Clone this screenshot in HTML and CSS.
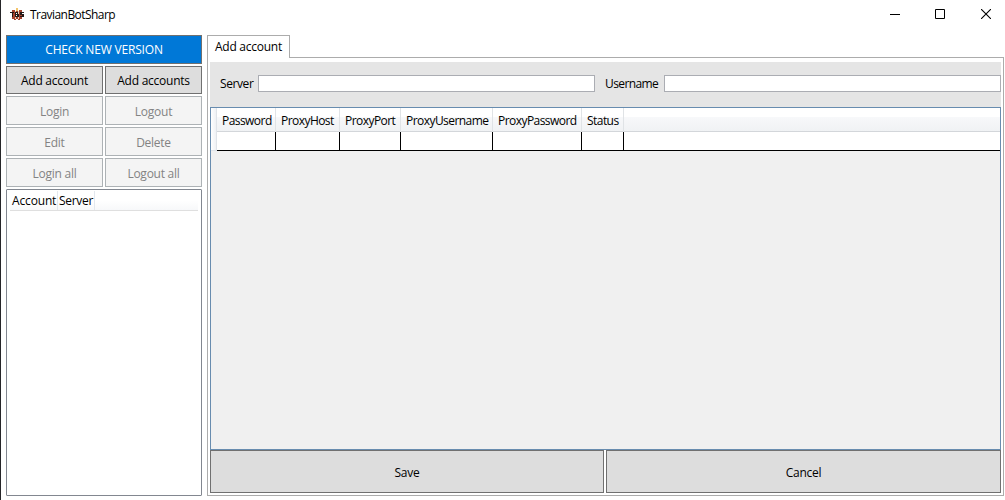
FILE: index.html
```html
<!DOCTYPE html>
<html lang="en">
<head>
  <meta charset="UTF-8">
  <title>TravianBotSharp</title>
  <link rel="stylesheet" href="styles.css">
</head>
<body>
  <div class="window">
    <header class="titlebar">
      <svg class="logo" width="14" height="14" viewBox="0 0 14 14">
        <path d="M6 0h2v3h-2z" fill="#f3c56b"/>
        <path d="M2 2h3v1h4v-1h3v9h-2v1h-2v-1h-2v1h-2v-1h-2z" fill="#a5402c"/>
        <path d="M5 3h1v8h-1zM8 3h1v8h-1z" fill="#ead0b8"/>
        <path d="M0 4h4v1h-1v4h-1v-4h-2zM5 4h3v2h1v3h-4zM10 4h4v1h-2v1h2v3h-4v-1h2v-1h-2z" fill="#241a18"/>
        <path d="M6 5h1v1h-1zM6 7h1v1h-1z" fill="#fff"/>
      </svg>
      <span class="title">TravianBotSharp</span>
      <div class="controls">
        <svg width="10" height="10" viewBox="0 0 10 10"><path d="M0 5.5h10" stroke="#000"/></svg>
        <svg width="10" height="10" viewBox="0 0 10 10"><path d="M.5 .5h9v9h-9z" fill="none" stroke="#000"/></svg>
        <svg width="10" height="10" viewBox="0 0 10 10"><path d="M0 0l10 10M10 0l-10 10" stroke="#000" stroke-width="1.1"/></svg>
      </div>
    </header>

    <div class="main">
      <aside class="sidebar">
        <button class="btn primary">CHECK NEW VERSION</button>
        <button class="btn">Add account</button>
        <button class="btn">Add accounts</button>
        <button class="btn" disabled>Login</button>
        <button class="btn" disabled>Logout</button>
        <button class="btn" disabled>Edit</button>
        <button class="btn" disabled>Delete</button>
        <button class="btn" disabled>Login all</button>
        <button class="btn" disabled>Logout all</button>
        <div class="accounts">
          <div class="accounts-head">
            <span class="col-account">Account</span>
            <span class="col-server">Server</span>
          </div>
        </div>
      </aside>

      <section class="tabs">
        <div class="tab">Add account</div>
        <div class="panel">
          <div class="form">
            <label class="lbl-server" for="server">Server</label>
            <input id="server" type="text">
            <label class="lbl-user" for="username">Username</label>
            <input id="username" type="text">
          </div>
          <div class="grid">
            <div class="row head">
              <span class="corner"></span>
              <span>Password</span>
              <span>ProxyHost</span>
              <span>ProxyPort</span>
              <span>ProxyUsername</span>
              <span>ProxyPassword</span>
              <span>Status</span>
              <span class="rest"></span>
            </div>
            <div class="row cells">
              <span class="corner"></span>
              <span></span>
              <span></span>
              <span></span>
              <span></span>
              <span></span>
              <span></span>
              <span class="rest"></span>
            </div>
          </div>
          <div class="actions">
            <button class="btn">Save</button>
            <button class="btn">Cancel</button>
          </div>
        </div>
      </section>
    </div>
  </div>
</body>
</html>
```
FILE: styles.css
```css
*{
  box-sizing: border-box;
}

body{
  margin: 0;
  background-color: #fff;
  color: #000;
  font-family: "Segoe UI", "Open Sans", sans-serif;
  font-size: 12px;
  letter-spacing: -0.25px;
  line-height: 16px;
}

.window{
  display: flex;
  flex-direction: column;
  height: 500px;
  border-left: 1px solid #252528;
  overflow: hidden;
}

.titlebar{
  display: flex;
  align-items: center;
  height: 29px;
  padding: 0 14px 0 9px;
}

.title{
  margin-left: 6px;
  flex: 1;
  letter-spacing: -0.55px;
}

.controls{
  display: flex;
  gap: 35px;
  padding-bottom: 1px;
}

.controls svg:last-child{
  margin-left: 1px;
}

.controls svg, .logo{
  display: block;
}

.main{
  display: flex;
  gap: 5px;
  padding: 6px 1px 4px 5px;
  height: 471px;
}

.sidebar{
  display: grid;
  grid-template-columns: 97px 97px;
  grid-template-rows: 29px 28px 29px 29px 29px 1fr;
  gap: 2px;
}

.btn{
  border: 1px solid #707070;
  background-color: #ddd;
  color: #000;
  font: inherit;
  letter-spacing: inherit;
  padding: 2px 0 0;
}

.btn:disabled{
  border-color: #adb2b5;
  background-color: #f4f4f4;
  color: #838383;
}

.primary{
  grid-column: span 2;
  background-color: #0078d7;
  color: #fff;
  padding-top: 0;
  letter-spacing: -0.18px;
}

.accounts{
  grid-column: span 2;
  border: 1px solid #828790;
  border-radius: 1px;
  padding: 1px 3px;
}

.accounts-head{
  display: flex;
  height: 20px;
  line-height: 19px;
  border-bottom: 1px solid #dfdfdf;
  background: linear-gradient(#fff 50%, #f7f8fa);
}

.accounts-head span{
  border-right: 1px solid #e3e8ee;
  padding-left: 2px;
  white-space: nowrap;
}

.accounts-head .col-account{
  width: 48px;
  letter-spacing: -0.15px;
}

.accounts-head .col-server{
  width: 37px;
  padding-left: 1px;
  letter-spacing: -0.3px;
}

.tabs{
  display: flex;
  flex-direction: column;
  width: 797px;
}

.tab{
  position: relative;
  width: 83px;
  height: 23px;
  border: 1px solid #acacac;
  border-bottom: none;
  background-color: #fff;
  line-height: 22px;
  text-align: center;
}

.panel{
  flex: 1;
  display: flex;
  flex-direction: column;
  margin-top: -1px;
  border: 1px solid #acacac;
  padding: 4px 2px 2px;
}

.form{
  display: flex;
  height: 45px;
  padding: 13px 0 0 10px;
  background-color: #e5e5e5;
  line-height: 18px;
}

.lbl-server{
  width: 38px;
  letter-spacing: -0.4px;
}

.lbl-user{
  width: 69px;
  padding-left: 10px;
  letter-spacing: -0.6px;
}

.form input{
  width: 337px;
  height: 17px;
  border: 1px solid #abadb3;
  background-color: #fff;
  padding: 0;
}

.grid{
  height: 343px;
  border: 1px solid #688caf;
  background-color: #f0f0f0;
}

.row{
  display: grid;
  grid-template-columns: 6px 59px 64px 61px 92px 89px 42px 1fr;
}

.head{
  height: 24px;
  line-height: 26px;
  border-bottom: 1px solid #d3d6da;
  background: linear-gradient(#fff 40%, #f7f8fa 41%, #f0f2f4);
}

.head span{
  border-right: 1px solid #e0e3e6;
  padding-left: 5px;
  white-space: nowrap;
  letter-spacing: -0.55px;
}

.cells{
  height: 19px;
}

.cells span{
  border-right: 1px solid #000;
  border-bottom: 1px solid #000;
  background-color: #fff;
}

.row .corner{
  padding: 0;
  border-color: #dfe3e8;
  background: linear-gradient(to right, #fff, #eff1f4);
}

.row .rest{
  border-right: none;
}

.actions{
  display: grid;
  grid-template-columns: 394px 395px;
  gap: 2px;
  height: 43px;
}
```
